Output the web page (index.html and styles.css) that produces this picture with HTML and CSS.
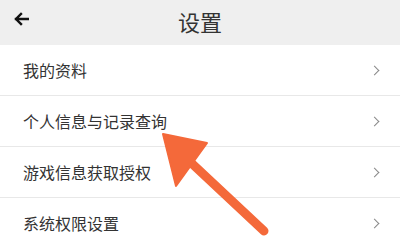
FILE: index.html
```html
<!DOCTYPE html>
<html lang="zh-CN">
<head>
  <meta charset="UTF-8" />
  <meta name="viewport" content="width=device-width, initial-scale=1.0" />
  <title>设置</title>
  <link rel="stylesheet" href="styles.css">
</head>
<body>
  <header class="topbar">
    <span class="back">
      <svg width="16" height="14" viewBox="0 0 16 14"><path d="M15 7H3M8 2L3 7l5 5" fill="none" stroke="#111" stroke-width="2.4" stroke-linecap="square"/></svg>
    </span>
    <h1>设置</h1>
  </header>

  <ul class="menu">
    <li>我的资料<span class="chev"></span></li>
    <li>个人信息与记录查询<span class="chev"></span></li>
    <li>游戏信息获取授权<span class="chev"></span></li>
    <li>系统权限设置<span class="chev"></span></li>
  </ul>

  <svg class="pointer" width="400" height="238" viewBox="0 0 400 238">
    <line x1="186" y1="158" x2="264" y2="231" stroke="#f4693a" stroke-width="9" stroke-linecap="round"/>
    <polygon points="163,134 207,143 176,186" fill="#f4693a" stroke="#f4693a" stroke-width="2" stroke-linejoin="round"/>
  </svg>
</body>
</html>
```

FILE: styles.css
```css
body {
  margin: 0;
  font-family: "Noto Sans CJK SC", "Noto Sans", sans-serif;
  background: #fff;
  color: #333;
  width: 400px;
  height: 238px;
  overflow: hidden;
  position: relative;
}
.topbar {
  height: 45px;
  box-sizing: border-box;
  padding-bottom: 4px;
  background: #efefef;
  display: flex;
  align-items: center;
  justify-content: center;
  position: relative;
}
.topbar h1 {
  margin: 0;
  font-size: 22px;
  font-weight: normal;
  color: #333;
}
.back {
  position: absolute;
  left: 13px;
  top: 12px;
  display: flex;
}
.menu {
  list-style: none;
  margin: 0;
  padding: 0;
}
.menu li {
  height: 50px;
  border-bottom: 1px solid #e8e8e8;
  display: flex;
  align-items: center;
  justify-content: space-between;
  padding: 0 22px 0 23px;
  font-size: 16px;
  color: #333;
}
.chev {
  width: 6px;
  height: 6px;
  border-top: 1.5px solid #888;
  border-right: 1.5px solid #888;
  transform: rotate(45deg);
}
.pointer {
  position: absolute;
  left: 0;
  top: 0;
}
```
